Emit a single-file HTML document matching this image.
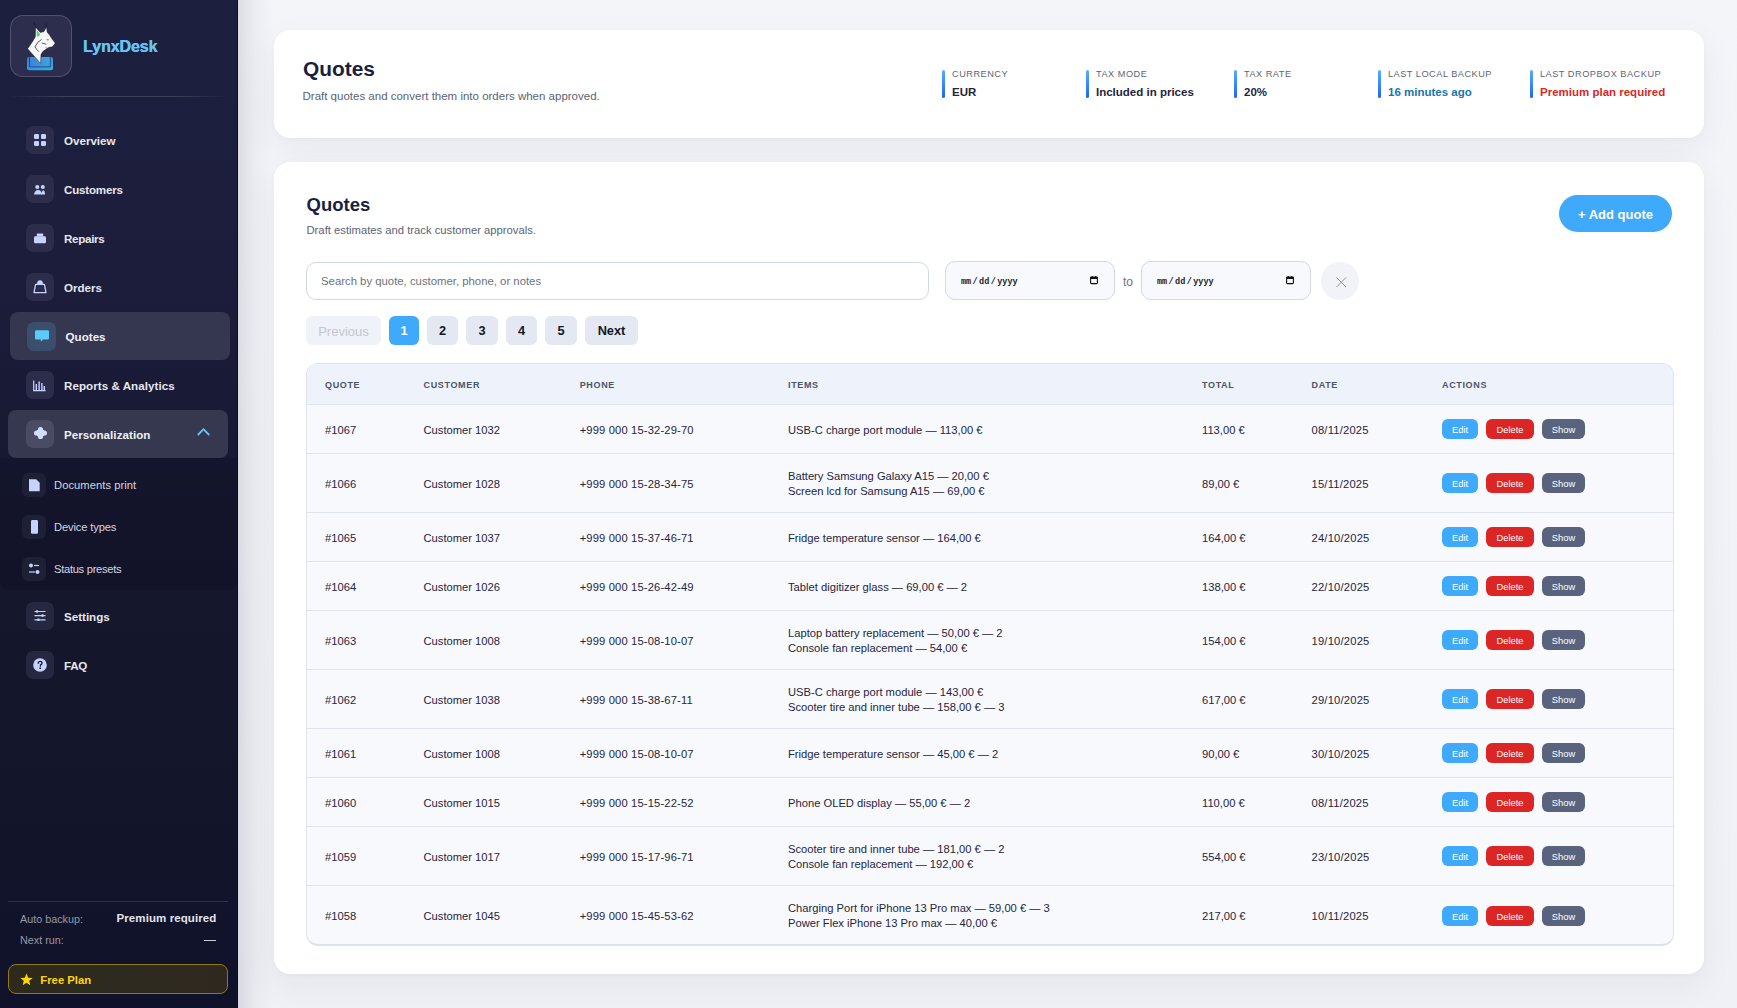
<!DOCTYPE html>
<html><head><meta charset="utf-8"><title>Quotes</title><style>
*{box-sizing:border-box;margin:0;padding:0}
html,body{width:1737px;height:1008px;overflow:hidden}
body{font-family:"Liberation Sans",sans-serif;background:linear-gradient(180deg,#f4f5f9,#f0f1f6);position:relative}
.t{position:absolute;line-height:1;white-space:nowrap}
.r{position:absolute}
svg{position:absolute;overflow:visible}
</style></head><body>
<div class="r" style="left:0;top:0;width:238px;height:1008px;background:linear-gradient(180deg,#1d1f3f 0%,#1c1e3c 22%,#191b36 38%,#15172d 58%,#13152a 80%,#10122a 100%)"></div>
<div class="r" style="left:237px;top:0;width:1px;height:1008px;background:#0b0d24"></div>
<div class="r" style="left:238px;top:0;width:36px;height:1008px;background:linear-gradient(90deg,rgba(10,12,40,.10),rgba(10,12,40,.03) 50%,rgba(10,12,40,0))"></div>
<div class="r" style="left:10px;top:15px;width:62px;height:62px;border-radius:13px;background:#2d2e4e;border:1px solid rgba(255,255,255,.17)"></div>
<svg style="left:0;top:0" width="100" height="100" viewBox="0 0 100 100">
<defs><linearGradient id="tg" x1="0" y1="0" x2="1" y2="1"><stop offset="0" stop-color="#3a7bd6"/><stop offset="1" stop-color="#36aee6"/></linearGradient>
<linearGradient id="tg2" x1="0" y1="0" x2="1" y2="0"><stop offset="0" stop-color="#3a86d8"/><stop offset="1" stop-color="#40a2e0"/></linearGradient></defs>
<rect x="27" y="57" width="26" height="13.2" rx="2" fill="url(#tg)"/>
<path d="M29.6 57 L29.6 66.8 L50.2 66.8 L50.2 57" fill="none" stroke="#22356e" stroke-width="0.9"/>
<rect x="30.3" y="57" width="19.2" height="9.2" fill="url(#tg2)"/>
<path d="M33.9 22.4 L35.9 27.6" stroke="#15172c" stroke-width="0.9"/>
<path d="M45.9 23.4 L46.4 27.2" stroke="#15172c" stroke-width="0.9"/>
<path d="M35.6 27.2 L40.3 32.4 L44 31.6 L46.5 26.8 L47.2 32.2 L49.6 35 L52.2 39.2 L55.2 43 L54 44.8 L52.4 46.8 L48.6 47.6 L45.6 49.6 L42.8 51.6 L41 54.6 L40.6 63.4 L27.6 48.8 L32.6 41.4 L35.3 36.9 Z" fill="#f6f7f9" stroke="#15172c" stroke-width="0.5"/>
<path d="M36.6 29.6 L40.2 34.6 L38.6 36.6 L36.8 36.4 Z" fill="#56d36a"/>
<ellipse cx="47.7" cy="39.7" rx="1.2" ry="0.7" fill="#3fbf5a"/>
<path d="M41.6 39.4 Q37.4 41.6 35 46.8 Q36.4 49.6 38.8 51.6" fill="none" stroke="#1b1d33" stroke-width="0.75"/>
<path d="M41.6 43 L46.4 44.2" stroke="#1b1d33" stroke-width="0.7"/>
<path d="M45.4 47.6 L48.6 48.6 L50.6 48.4" stroke="#3a3c50" stroke-width="0.5" fill="none"/>
</svg>
<div class="t" style="top:39.20px;font-size:16px;font-weight:700;color:#65c4f5;left:83.00px;text-shadow:0.35px 0 0 #65c4f5;letter-spacing:-0.1px">LynxDesk</div>
<div class="r" style="left:8px;top:96px;width:222px;height:1px;background:linear-gradient(90deg,rgba(255,255,255,0),rgba(255,255,255,.15) 25%,rgba(255,255,255,.15) 75%,rgba(255,255,255,0))"></div>
<div class="r" style="left:26px;top:126.0px;width:28px;height:28px;border-radius:7px;background:#2b2d4a"></div>
<svg style="left:34px;top:134px" width="12" height="12"><rect x="0" y="0" width="5" height="5" rx="1.3" fill="#c7d3ff"/><rect x="7" y="0" width="5" height="5" rx="1.3" fill="#c7d3ff"/><rect x="0" y="7" width="5" height="5" rx="1.3" fill="#c7d3ff"/><rect x="7" y="7" width="5" height="5" rx="1.3" fill="#c7d3ff"/></svg>
<div class="t" style="top:135.10px;font-size:11.6px;font-weight:700;color:#e6e7ef;left:64.00px;">Overview</div>
<div class="r" style="left:26px;top:175.0px;width:28px;height:28px;border-radius:7px;background:#2b2d4a"></div>
<svg style="left:34px;top:184px" width="12" height="11"><circle cx="3.3" cy="3" r="2.05" fill="#c7d3ff"/><circle cx="8.8" cy="3" r="2.05" fill="#c7d3ff"/><path d="M0.1 10.5 Q0.6 6 4.1 6 Q7.6 6 8.1 10.5 Z" fill="#c7d3ff"/><path d="M7.6 10.5 Q8 6.2 9.2 6.2 Q10.7 6.2 11.1 10.5 Z" fill="#c7d3ff"/></svg>
<div class="t" style="top:184.10px;font-size:11.6px;font-weight:700;color:#e6e7ef;left:64.00px;letter-spacing:-0.2px">Customers</div>
<div class="r" style="left:26px;top:224.0px;width:28px;height:28px;border-radius:7px;background:#2b2d4a"></div>
<svg style="left:34px;top:233px" width="12" height="11"><path d="M2.8 0.5 L9.2 0.5 L9.2 3.5 L2.8 3.5 Z" fill="#c7d3ff"/><rect x="0" y="3.3" width="12" height="7" rx="1.3" fill="#c7d3ff"/></svg>
<div class="t" style="top:233.10px;font-size:11.6px;font-weight:700;color:#e6e7ef;left:64.00px;letter-spacing:-0.3px">Repairs</div>
<div class="r" style="left:26px;top:273.0px;width:28px;height:28px;border-radius:7px;background:#2b2d4a"></div>
<svg style="left:33px;top:279px" width="14" height="15"><path d="M4 5 Q4 1.2 7 1.2 Q10 1.2 10 5 Z" fill="#c7d3ff"/><path d="M2.6 5.3 L11.4 5.3 L13 13.6 L1 13.6 Z" fill="none" stroke="#c7d3ff" stroke-width="1.3" stroke-linejoin="round"/></svg>
<div class="t" style="top:282.10px;font-size:11.6px;font-weight:700;color:#e6e7ef;left:64.00px;">Orders</div>
<div class="r" style="left:10px;top:312px;width:220px;height:48px;border-radius:8px;background:#353750"></div>
<div class="r" style="left:27px;top:321.5px;width:29px;height:29px;border-radius:7px;background:#3b4e6b"></div>
<svg style="left:35px;top:330px" width="14" height="13"><path d="M1.2 0.3 L12.8 0.3 Q14 0.3 14 1.5 L14 8.2 Q14 9.4 12.8 9.4 L8 9.4 L6 11.8 L5.8 9.4 L1.2 9.4 Q0 9.4 0 8.2 L0 1.5 Q0 0.3 1.2 0.3 Z" fill="#5ccbf9"/></svg>
<div class="t" style="top:331.10px;font-size:11.6px;font-weight:700;color:#eef0f6;left:65.60px;">Quotes</div>
<div class="r" style="left:26px;top:371.0px;width:28px;height:28px;border-radius:7px;background:#2b2d4a"></div>
<svg style="left:33px;top:380px" width="13" height="12"><path d="M0.7 0.5 L0.7 10.6 L12.6 10.6" fill="none" stroke="#c7d3ff" stroke-width="1.2"/><rect x="2.6" y="4" width="1.4" height="6" fill="#c7d3ff"/><rect x="5.4" y="1.5" width="1.4" height="8.5" fill="#c7d3ff"/><rect x="8.2" y="3" width="1.4" height="7" fill="#c7d3ff"/><rect x="10.6" y="6" width="1.4" height="4" fill="#c7d3ff"/></svg>
<div class="t" style="top:380.10px;font-size:11.6px;font-weight:700;color:#e6e7ef;left:64.00px;letter-spacing:0.05px">Reports &amp; Analytics</div>
<div class="r" style="left:8px;top:410px;width:220px;height:48px;border-radius:8px;background:#363850"></div>
<div class="r" style="left:26px;top:420.0px;width:28px;height:28px;border-radius:7px;background:#4a4c64"></div>
<svg style="left:33.5px;top:426.5px" width="13" height="12"><circle cx="6.5" cy="2.6" r="2.6" fill="#d2ddff"/><circle cx="6.5" cy="9.4" r="2.6" fill="#d2ddff"/><circle cx="2.6" cy="6" r="2.6" fill="#d2ddff"/><circle cx="10.4" cy="6" r="2.6" fill="#d2ddff"/><rect x="3" y="3" width="7" height="6" fill="#d2ddff"/></svg>
<div class="t" style="top:429.10px;font-size:11.6px;font-weight:700;color:#eef0f6;left:64.00px;letter-spacing:0.05px">Personalization</div>
<svg style="left:197px;top:427px" width="13" height="9"><path d="M0.8 8 L6.5 2.2 L12.2 8" fill="none" stroke="#5ccaf7" stroke-width="1.8"/></svg>
<div class="r" style="left:0;top:458px;width:237px;height:132px;background:rgba(8,9,24,.22);border-radius:0 0 8px 8px"></div>
<div class="r" style="left:22px;top:473px;width:24px;height:24px;border-radius:6px;background:#1e2035"></div>
<svg style="left:29px;top:479px" width="11" height="13"><path d="M0 0.2 L7.2 0.2 L10.7 3.8 L10.7 12.2 L0 12.2 Z" fill="#c7d3ff"/></svg>
<div class="t" style="top:480.40px;font-size:11.2px;font-weight:400;color:#d4d6e0;left:54.00px;letter-spacing:0.05px">Documents print</div>
<div class="r" style="left:22px;top:515px;width:24px;height:24px;border-radius:6px;background:#1e2035"></div>
<svg style="left:30.5px;top:520px" width="8" height="14"><rect x="0" y="0" width="7" height="13.7" rx="1.3" fill="#c7d3ff"/></svg>
<div class="t" style="top:522.40px;font-size:11.2px;font-weight:400;color:#d4d6e0;left:54.00px;letter-spacing:-0.15px">Device types</div>
<div class="r" style="left:22px;top:557px;width:24px;height:24px;border-radius:6px;background:#1e2035"></div>
<svg style="left:28px;top:562px" width="13" height="13"><circle cx="3" cy="3.5" r="2" fill="#c7d3ff"/><path d="M6 3.5 L11 3.5" stroke="#c7d3ff" stroke-width="1.2"/><path d="M1 10 L7 10" stroke="#c7d3ff" stroke-width="1.2"/><circle cx="9.5" cy="10" r="2" fill="#c7d3ff"/></svg>
<div class="t" style="top:564.40px;font-size:11.2px;font-weight:400;color:#d4d6e0;left:54.00px;letter-spacing:-0.3px">Status presets</div>
<div class="r" style="left:26px;top:602.0px;width:28px;height:28px;border-radius:7px;background:#262841"></div>
<svg style="left:34px;top:610px" width="12" height="12"><path d="M0.5 1.5 L11.5 1.5 M0.5 5.6 L11.5 5.6 M0.5 9.8 L11.5 9.8" stroke="#c7d3ff" stroke-width="1.2"/><circle cx="3" cy="1.5" r="1.3" fill="#c7d3ff"/><circle cx="8.5" cy="5.6" r="1.3" fill="#c7d3ff"/><circle cx="4.5" cy="9.8" r="1.3" fill="#c7d3ff"/></svg>
<div class="t" style="top:611.10px;font-size:11.6px;font-weight:700;color:#e6e7ef;left:64.00px;">Settings</div>
<div class="r" style="left:26px;top:651.0px;width:28px;height:28px;border-radius:7px;background:#262841"></div>
<svg style="left:33px;top:658px" width="14" height="14"><circle cx="7" cy="7" r="6.8" fill="#c7d3ff"/><path d="M5.3 5.3 Q5.3 3.4 7.2 3.4 Q9 3.4 9 5 Q9 6.2 7.6 6.8 L7.4 8" fill="none" stroke="#1a1c33" stroke-width="1.4" stroke-linecap="round"/><circle cx="7.2" cy="10.2" r="0.9" fill="#1a1c33"/></svg>
<div class="t" style="top:660.10px;font-size:11.6px;font-weight:700;color:#e6e7ef;left:64.00px;letter-spacing:-0.3px">FAQ</div>
<div class="r" style="left:8px;top:901px;width:220px;height:1px;background:rgba(255,255,255,.13)"></div>
<div class="t" style="top:913.60px;font-size:10.8px;font-weight:400;color:#9899a9;left:20.00px;">Auto backup:</div>
<div class="t" style="top:913.45px;font-size:11.5px;font-weight:700;color:#e3e4ec;right:1520.50px;text-align:right;letter-spacing:0.1px">Premium required</div>
<div class="t" style="top:934.60px;font-size:10.8px;font-weight:400;color:#9899a9;left:20.00px;">Next run:</div>
<div class="r" style="left:204px;top:939.6px;width:12px;height:1.2px;background:#c9cad4"></div>
<div class="r" style="left:8px;top:964px;width:220px;height:30px;border-radius:8px;background:linear-gradient(90deg,#2d2a1c,#2e2a20 60%,#30281f);border:1px solid #8f7a12"></div>
<svg style="left:20px;top:972.5px" width="13" height="13" viewBox="0 0 24 24"><path d="M12 1 L15.1 8.6 L23.3 9.2 L17 14.4 L19 22.4 L12 18 L5 22.4 L7 14.4 L0.7 9.2 L8.9 8.6 Z" fill="#ffd60a"/></svg>
<div class="t" style="top:974.55px;font-size:11.3px;font-weight:700;color:#ffd60a;left:40.30px;">Free Plan</div>
<div class="r" style="left:274px;top:30px;width:1430px;height:108px;border-radius:16px;background:#fff;box-shadow:0 12px 36px rgba(30,40,80,.055),0 2px 6px rgba(30,40,80,.025)"></div>
<div class="t" style="top:59.05px;font-size:20.9px;font-weight:700;color:#1a1f3d;left:303.00px;">Quotes</div>
<div class="t" style="top:91.00px;font-size:11.5px;font-weight:400;color:#5a6378;left:302.50px;">Draft quotes and convert them into orders when approved.</div>
<div class="r" style="left:942px;top:70px;width:3px;height:28px;border-radius:2px;background:linear-gradient(180deg,#55adff,#2266ee)"></div>
<div class="t" style="top:70.40px;font-size:9.2px;font-weight:400;color:#5b6478;letter-spacing:0.5px;left:952.00px;">CURRENCY</div>
<div class="t" style="top:87.15px;font-size:11.5px;font-weight:700;color:#1f2540;left:952.00px;">EUR</div>
<div class="r" style="left:1086px;top:70px;width:3px;height:28px;border-radius:2px;background:linear-gradient(180deg,#55adff,#2266ee)"></div>
<div class="t" style="top:70.40px;font-size:9.2px;font-weight:400;color:#5b6478;letter-spacing:0.5px;left:1096.00px;">TAX MODE</div>
<div class="t" style="top:87.15px;font-size:11.5px;font-weight:700;color:#1f2540;left:1096.00px;">Included in prices</div>
<div class="r" style="left:1234px;top:70px;width:3px;height:28px;border-radius:2px;background:linear-gradient(180deg,#55adff,#2266ee)"></div>
<div class="t" style="top:70.40px;font-size:9.2px;font-weight:400;color:#5b6478;letter-spacing:0.5px;left:1244.00px;">TAX RATE</div>
<div class="t" style="top:87.15px;font-size:11.5px;font-weight:700;color:#1f2540;left:1244.00px;">20%</div>
<div class="r" style="left:1378px;top:70px;width:3px;height:28px;border-radius:2px;background:linear-gradient(180deg,#55adff,#2266ee)"></div>
<div class="t" style="top:70.40px;font-size:9.2px;font-weight:400;color:#5b6478;letter-spacing:0.5px;left:1388.00px;">LAST LOCAL BACKUP</div>
<div class="t" style="top:87.15px;font-size:11.5px;font-weight:700;color:#1677a8;left:1388.00px;">16 minutes ago</div>
<div class="r" style="left:1530px;top:70px;width:3px;height:28px;border-radius:2px;background:linear-gradient(180deg,#55adff,#2266ee)"></div>
<div class="t" style="top:70.40px;font-size:9.2px;font-weight:400;color:#5b6478;letter-spacing:0.5px;left:1540.00px;">LAST DROPBOX BACKUP</div>
<div class="t" style="top:87.15px;font-size:11.5px;font-weight:700;color:#dc2626;left:1540.00px;">Premium plan required</div>
<div class="r" style="left:274px;top:162px;width:1430px;height:812px;border-radius:16px;background:#fff;box-shadow:0 12px 36px rgba(30,40,80,.055),0 2px 6px rgba(30,40,80,.025)"></div>
<div class="t" style="top:196.00px;font-size:18.5px;font-weight:700;color:#1a1f3d;left:306.50px;">Quotes</div>
<div class="t" style="top:225.18px;font-size:11.25px;font-weight:400;color:#5a6378;left:306.50px;">Draft estimates and track customer approvals.</div>
<div class="r" style="left:1559px;top:195px;width:113px;height:37px;border-radius:19px;background:#3fa9fb"></div>
<div class="t" style="top:207.75px;font-size:13px;font-weight:700;color:#ffffff;left:1315.50px;width:600px;text-align:center;">+ Add quote</div>
<div class="r" style="left:306px;top:262px;width:623px;height:38px;border-radius:10px;background:#fff;border:1px solid #d3d8e3"></div>
<div class="t" style="top:276.32px;font-size:11.35px;font-weight:400;color:#6b7280;left:321.00px;">Search by quote, customer, phone, or notes</div>
<div class="r" style="left:945px;top:261px;width:170px;height:39px;border-radius:10px;background:#f8f9fd;border:1px solid #d3d8e3"></div>
<div class="t" style="top:277.55px;font-size:8.5px;font-weight:700;color:#222222;left:961.00px;font-family:'Liberation Mono',monospace;word-spacing:-3.7px">mm / dd / yyyy</div>
<svg style="left:1090px;top:276px" width="8" height="8"><rect x="0.6" y="1" width="6.8" height="6.6" rx="0.8" fill="none" stroke="#111" stroke-width="1.1"/><rect x="0.6" y="1" width="6.8" height="2" fill="#111"/><path d="M2.2 0 L2.2 1.5 M5.8 0 L5.8 1.5" stroke="#111" stroke-width="1"/></svg>
<div class="r" style="left:1141px;top:261px;width:170px;height:39px;border-radius:10px;background:#f8f9fd;border:1px solid #d3d8e3"></div>
<div class="t" style="top:277.55px;font-size:8.5px;font-weight:700;color:#222222;left:1157.00px;font-family:'Liberation Mono',monospace;word-spacing:-3.7px">mm / dd / yyyy</div>
<svg style="left:1286px;top:276px" width="8" height="8"><rect x="0.6" y="1" width="6.8" height="6.6" rx="0.8" fill="none" stroke="#111" stroke-width="1.1"/><rect x="0.6" y="1" width="6.8" height="2" fill="#111"/><path d="M2.2 0 L2.2 1.5 M5.8 0 L5.8 1.5" stroke="#111" stroke-width="1"/></svg>
<div class="t" style="top:275.50px;font-size:12px;font-weight:400;color:#6b7280;left:1123.00px;">to</div>
<div class="r" style="left:1321px;top:262px;width:38px;height:38px;border-radius:19px;background:#f2f3f8"></div>
<svg style="left:1335.5px;top:276.5px" width="11" height="11"><path d="M0.5 0.5 L10 10 M10 0.5 L0.5 10" stroke="#8e929e" stroke-width="1"/></svg>
<div class="r" style="left:306px;top:316px;width:75px;height:29px;border-radius:6px;background:#eff2f8"></div>
<div class="t" style="top:325.30px;font-size:13px;font-weight:400;color:#c3c8d2;left:43.50px;width:600px;text-align:center;">Previous</div>
<div class="r" style="left:389px;top:316px;width:30px;height:29px;border-radius:6px;background:#3fa9fb"></div>
<div class="t" style="top:325.40px;font-size:12.8px;font-weight:700;color:#ffffff;left:104.00px;width:600px;text-align:center;">1</div>
<div class="r" style="left:427px;top:316px;width:31px;height:29px;border-radius:6px;background:#e3e8f2"></div>
<div class="t" style="top:325.40px;font-size:12.8px;font-weight:700;color:#111827;left:142.50px;width:600px;text-align:center;">2</div>
<div class="r" style="left:466px;top:316px;width:32px;height:29px;border-radius:6px;background:#e3e8f2"></div>
<div class="t" style="top:325.40px;font-size:12.8px;font-weight:700;color:#111827;left:182.00px;width:600px;text-align:center;">3</div>
<div class="r" style="left:506px;top:316px;width:31px;height:29px;border-radius:6px;background:#e3e8f2"></div>
<div class="t" style="top:325.40px;font-size:12.8px;font-weight:700;color:#111827;left:221.50px;width:600px;text-align:center;">4</div>
<div class="r" style="left:545px;top:316px;width:32px;height:29px;border-radius:6px;background:#e3e8f2"></div>
<div class="t" style="top:325.40px;font-size:12.8px;font-weight:700;color:#111827;left:261.00px;width:600px;text-align:center;">5</div>
<div class="r" style="left:585px;top:316px;width:53px;height:29px;border-radius:6px;background:#e3e8f2"></div>
<div class="t" style="top:325.40px;font-size:12.8px;font-weight:700;color:#111827;left:311.50px;width:600px;text-align:center;">Next</div>
<div class="r" style="left:306px;top:363px;width:1368px;height:583px;border-radius:12px;background:#f8f9fd;border:1px solid #dfe4ee;border-bottom:2px solid #dde3ee;overflow:hidden"><div class="r" style="left:0;top:0;width:100%;height:41px;background:#eef2fa"></div></div>
<div class="t" style="top:380.80px;font-size:9px;font-weight:700;color:#4b5468;letter-spacing:0.65px;left:325.00px;">QUOTE</div>
<div class="t" style="top:380.80px;font-size:9px;font-weight:700;color:#4b5468;letter-spacing:0.65px;left:423.50px;">CUSTOMER</div>
<div class="t" style="top:380.80px;font-size:9px;font-weight:700;color:#4b5468;letter-spacing:0.65px;left:579.70px;">PHONE</div>
<div class="t" style="top:380.80px;font-size:9px;font-weight:700;color:#4b5468;letter-spacing:0.65px;left:788.00px;">ITEMS</div>
<div class="t" style="top:380.80px;font-size:9px;font-weight:700;color:#4b5468;letter-spacing:0.65px;left:1202.00px;">TOTAL</div>
<div class="t" style="top:380.80px;font-size:9px;font-weight:700;color:#4b5468;letter-spacing:0.65px;left:1311.50px;">DATE</div>
<div class="t" style="top:380.80px;font-size:9px;font-weight:700;color:#4b5468;letter-spacing:0.65px;left:1442.00px;">ACTIONS</div>
<div class="r" style="left:307px;top:404px;width:1366px;height:1px;background:#dfe4ee"></div>
<div class="r" style="left:307px;top:453px;width:1366px;height:1px;background:#dfe4ee"></div>
<div class="r" style="left:307px;top:512px;width:1366px;height:1px;background:#dfe4ee"></div>
<div class="r" style="left:307px;top:561px;width:1366px;height:1px;background:#dfe4ee"></div>
<div class="r" style="left:307px;top:610px;width:1366px;height:1px;background:#dfe4ee"></div>
<div class="r" style="left:307px;top:669px;width:1366px;height:1px;background:#dfe4ee"></div>
<div class="r" style="left:307px;top:728px;width:1366px;height:1px;background:#dfe4ee"></div>
<div class="r" style="left:307px;top:777px;width:1366px;height:1px;background:#dfe4ee"></div>
<div class="r" style="left:307px;top:826px;width:1366px;height:1px;background:#dfe4ee"></div>
<div class="r" style="left:307px;top:885px;width:1366px;height:1px;background:#dfe4ee"></div>
<div class="t" style="top:424.75px;font-size:11.2px;font-weight:400;color:#1f2540;left:325.00px;">#1067</div>
<div class="t" style="top:424.75px;font-size:11.2px;font-weight:400;color:#1f2540;left:423.50px;">Customer 1032</div>
<div class="t" style="top:424.75px;font-size:11.2px;font-weight:400;color:#1f2540;left:579.70px;letter-spacing:0.15px">+999 000 15-32-29-70</div>
<div class="t" style="top:424.75px;font-size:11.2px;font-weight:400;color:#1f2540;left:788.00px;">USB-C charge port module — 113,00 €</div>
<div class="t" style="top:424.75px;font-size:11.2px;font-weight:400;color:#1f2540;left:1202.00px;">113,00 €</div>
<div class="t" style="top:424.75px;font-size:11.2px;font-weight:400;color:#1f2540;left:1311.50px;letter-spacing:0.2px">08/11/2025</div>
<div class="r" style="left:1442px;top:419px;width:36px;height:20px;border-radius:6px;background:#3fa9fb"></div>
<div class="t" style="top:425.35px;font-size:9.4px;font-weight:400;color:#fff;left:1160.00px;width:600px;text-align:center;">Edit</div>
<div class="r" style="left:1486px;top:419px;width:48px;height:20px;border-radius:6px;background:#dc2626"></div>
<div class="t" style="top:425.35px;font-size:9.4px;font-weight:400;color:#fff;left:1210.00px;width:600px;text-align:center;">Delete</div>
<div class="r" style="left:1542px;top:419px;width:43px;height:20px;border-radius:6px;background:#5a637d"></div>
<div class="t" style="top:425.35px;font-size:9.4px;font-weight:400;color:#fff;left:1263.50px;width:600px;text-align:center;">Show</div>
<div class="t" style="top:478.75px;font-size:11.2px;font-weight:400;color:#1f2540;left:325.00px;">#1066</div>
<div class="t" style="top:478.75px;font-size:11.2px;font-weight:400;color:#1f2540;left:423.50px;">Customer 1028</div>
<div class="t" style="top:478.75px;font-size:11.2px;font-weight:400;color:#1f2540;left:579.70px;letter-spacing:0.15px">+999 000 15-28-34-75</div>
<div class="t" style="top:470.65px;font-size:11.2px;font-weight:400;color:#1f2540;left:788.00px;">Battery Samsung Galaxy A15 — 20,00 €</div>
<div class="t" style="top:485.65px;font-size:11.2px;font-weight:400;color:#1f2540;left:788.00px;">Screen lcd for Samsung A15 — 69,00 €</div>
<div class="t" style="top:478.75px;font-size:11.2px;font-weight:400;color:#1f2540;left:1202.00px;">89,00 €</div>
<div class="t" style="top:478.75px;font-size:11.2px;font-weight:400;color:#1f2540;left:1311.50px;letter-spacing:0.2px">15/11/2025</div>
<div class="r" style="left:1442px;top:473px;width:36px;height:20px;border-radius:6px;background:#3fa9fb"></div>
<div class="t" style="top:479.35px;font-size:9.4px;font-weight:400;color:#fff;left:1160.00px;width:600px;text-align:center;">Edit</div>
<div class="r" style="left:1486px;top:473px;width:48px;height:20px;border-radius:6px;background:#dc2626"></div>
<div class="t" style="top:479.35px;font-size:9.4px;font-weight:400;color:#fff;left:1210.00px;width:600px;text-align:center;">Delete</div>
<div class="r" style="left:1542px;top:473px;width:43px;height:20px;border-radius:6px;background:#5a637d"></div>
<div class="t" style="top:479.35px;font-size:9.4px;font-weight:400;color:#fff;left:1263.50px;width:600px;text-align:center;">Show</div>
<div class="t" style="top:532.75px;font-size:11.2px;font-weight:400;color:#1f2540;left:325.00px;">#1065</div>
<div class="t" style="top:532.75px;font-size:11.2px;font-weight:400;color:#1f2540;left:423.50px;">Customer 1037</div>
<div class="t" style="top:532.75px;font-size:11.2px;font-weight:400;color:#1f2540;left:579.70px;letter-spacing:0.15px">+999 000 15-37-46-71</div>
<div class="t" style="top:532.75px;font-size:11.2px;font-weight:400;color:#1f2540;left:788.00px;">Fridge temperature sensor — 164,00 €</div>
<div class="t" style="top:532.75px;font-size:11.2px;font-weight:400;color:#1f2540;left:1202.00px;">164,00 €</div>
<div class="t" style="top:532.75px;font-size:11.2px;font-weight:400;color:#1f2540;left:1311.50px;letter-spacing:0.2px">24/10/2025</div>
<div class="r" style="left:1442px;top:527px;width:36px;height:20px;border-radius:6px;background:#3fa9fb"></div>
<div class="t" style="top:533.35px;font-size:9.4px;font-weight:400;color:#fff;left:1160.00px;width:600px;text-align:center;">Edit</div>
<div class="r" style="left:1486px;top:527px;width:48px;height:20px;border-radius:6px;background:#dc2626"></div>
<div class="t" style="top:533.35px;font-size:9.4px;font-weight:400;color:#fff;left:1210.00px;width:600px;text-align:center;">Delete</div>
<div class="r" style="left:1542px;top:527px;width:43px;height:20px;border-radius:6px;background:#5a637d"></div>
<div class="t" style="top:533.35px;font-size:9.4px;font-weight:400;color:#fff;left:1263.50px;width:600px;text-align:center;">Show</div>
<div class="t" style="top:581.75px;font-size:11.2px;font-weight:400;color:#1f2540;left:325.00px;">#1064</div>
<div class="t" style="top:581.75px;font-size:11.2px;font-weight:400;color:#1f2540;left:423.50px;">Customer 1026</div>
<div class="t" style="top:581.75px;font-size:11.2px;font-weight:400;color:#1f2540;left:579.70px;letter-spacing:0.15px">+999 000 15-26-42-49</div>
<div class="t" style="top:581.75px;font-size:11.2px;font-weight:400;color:#1f2540;left:788.00px;">Tablet digitizer glass — 69,00 € — 2</div>
<div class="t" style="top:581.75px;font-size:11.2px;font-weight:400;color:#1f2540;left:1202.00px;">138,00 €</div>
<div class="t" style="top:581.75px;font-size:11.2px;font-weight:400;color:#1f2540;left:1311.50px;letter-spacing:0.2px">22/10/2025</div>
<div class="r" style="left:1442px;top:576px;width:36px;height:20px;border-radius:6px;background:#3fa9fb"></div>
<div class="t" style="top:582.35px;font-size:9.4px;font-weight:400;color:#fff;left:1160.00px;width:600px;text-align:center;">Edit</div>
<div class="r" style="left:1486px;top:576px;width:48px;height:20px;border-radius:6px;background:#dc2626"></div>
<div class="t" style="top:582.35px;font-size:9.4px;font-weight:400;color:#fff;left:1210.00px;width:600px;text-align:center;">Delete</div>
<div class="r" style="left:1542px;top:576px;width:43px;height:20px;border-radius:6px;background:#5a637d"></div>
<div class="t" style="top:582.35px;font-size:9.4px;font-weight:400;color:#fff;left:1263.50px;width:600px;text-align:center;">Show</div>
<div class="t" style="top:635.75px;font-size:11.2px;font-weight:400;color:#1f2540;left:325.00px;">#1063</div>
<div class="t" style="top:635.75px;font-size:11.2px;font-weight:400;color:#1f2540;left:423.50px;">Customer 1008</div>
<div class="t" style="top:635.75px;font-size:11.2px;font-weight:400;color:#1f2540;left:579.70px;letter-spacing:0.15px">+999 000 15-08-10-07</div>
<div class="t" style="top:627.65px;font-size:11.2px;font-weight:400;color:#1f2540;left:788.00px;">Laptop battery replacement — 50,00 € — 2</div>
<div class="t" style="top:642.65px;font-size:11.2px;font-weight:400;color:#1f2540;left:788.00px;">Console fan replacement — 54,00 €</div>
<div class="t" style="top:635.75px;font-size:11.2px;font-weight:400;color:#1f2540;left:1202.00px;">154,00 €</div>
<div class="t" style="top:635.75px;font-size:11.2px;font-weight:400;color:#1f2540;left:1311.50px;letter-spacing:0.2px">19/10/2025</div>
<div class="r" style="left:1442px;top:630px;width:36px;height:20px;border-radius:6px;background:#3fa9fb"></div>
<div class="t" style="top:636.35px;font-size:9.4px;font-weight:400;color:#fff;left:1160.00px;width:600px;text-align:center;">Edit</div>
<div class="r" style="left:1486px;top:630px;width:48px;height:20px;border-radius:6px;background:#dc2626"></div>
<div class="t" style="top:636.35px;font-size:9.4px;font-weight:400;color:#fff;left:1210.00px;width:600px;text-align:center;">Delete</div>
<div class="r" style="left:1542px;top:630px;width:43px;height:20px;border-radius:6px;background:#5a637d"></div>
<div class="t" style="top:636.35px;font-size:9.4px;font-weight:400;color:#fff;left:1263.50px;width:600px;text-align:center;">Show</div>
<div class="t" style="top:694.75px;font-size:11.2px;font-weight:400;color:#1f2540;left:325.00px;">#1062</div>
<div class="t" style="top:694.75px;font-size:11.2px;font-weight:400;color:#1f2540;left:423.50px;">Customer 1038</div>
<div class="t" style="top:694.75px;font-size:11.2px;font-weight:400;color:#1f2540;left:579.70px;letter-spacing:0.15px">+999 000 15-38-67-11</div>
<div class="t" style="top:686.65px;font-size:11.2px;font-weight:400;color:#1f2540;left:788.00px;">USB-C charge port module — 143,00 €</div>
<div class="t" style="top:701.65px;font-size:11.2px;font-weight:400;color:#1f2540;left:788.00px;">Scooter tire and inner tube — 158,00 € — 3</div>
<div class="t" style="top:694.75px;font-size:11.2px;font-weight:400;color:#1f2540;left:1202.00px;">617,00 €</div>
<div class="t" style="top:694.75px;font-size:11.2px;font-weight:400;color:#1f2540;left:1311.50px;letter-spacing:0.2px">29/10/2025</div>
<div class="r" style="left:1442px;top:689px;width:36px;height:20px;border-radius:6px;background:#3fa9fb"></div>
<div class="t" style="top:695.35px;font-size:9.4px;font-weight:400;color:#fff;left:1160.00px;width:600px;text-align:center;">Edit</div>
<div class="r" style="left:1486px;top:689px;width:48px;height:20px;border-radius:6px;background:#dc2626"></div>
<div class="t" style="top:695.35px;font-size:9.4px;font-weight:400;color:#fff;left:1210.00px;width:600px;text-align:center;">Delete</div>
<div class="r" style="left:1542px;top:689px;width:43px;height:20px;border-radius:6px;background:#5a637d"></div>
<div class="t" style="top:695.35px;font-size:9.4px;font-weight:400;color:#fff;left:1263.50px;width:600px;text-align:center;">Show</div>
<div class="t" style="top:748.75px;font-size:11.2px;font-weight:400;color:#1f2540;left:325.00px;">#1061</div>
<div class="t" style="top:748.75px;font-size:11.2px;font-weight:400;color:#1f2540;left:423.50px;">Customer 1008</div>
<div class="t" style="top:748.75px;font-size:11.2px;font-weight:400;color:#1f2540;left:579.70px;letter-spacing:0.15px">+999 000 15-08-10-07</div>
<div class="t" style="top:748.75px;font-size:11.2px;font-weight:400;color:#1f2540;left:788.00px;">Fridge temperature sensor — 45,00 € — 2</div>
<div class="t" style="top:748.75px;font-size:11.2px;font-weight:400;color:#1f2540;left:1202.00px;">90,00 €</div>
<div class="t" style="top:748.75px;font-size:11.2px;font-weight:400;color:#1f2540;left:1311.50px;letter-spacing:0.2px">30/10/2025</div>
<div class="r" style="left:1442px;top:743px;width:36px;height:20px;border-radius:6px;background:#3fa9fb"></div>
<div class="t" style="top:749.35px;font-size:9.4px;font-weight:400;color:#fff;left:1160.00px;width:600px;text-align:center;">Edit</div>
<div class="r" style="left:1486px;top:743px;width:48px;height:20px;border-radius:6px;background:#dc2626"></div>
<div class="t" style="top:749.35px;font-size:9.4px;font-weight:400;color:#fff;left:1210.00px;width:600px;text-align:center;">Delete</div>
<div class="r" style="left:1542px;top:743px;width:43px;height:20px;border-radius:6px;background:#5a637d"></div>
<div class="t" style="top:749.35px;font-size:9.4px;font-weight:400;color:#fff;left:1263.50px;width:600px;text-align:center;">Show</div>
<div class="t" style="top:797.75px;font-size:11.2px;font-weight:400;color:#1f2540;left:325.00px;">#1060</div>
<div class="t" style="top:797.75px;font-size:11.2px;font-weight:400;color:#1f2540;left:423.50px;">Customer 1015</div>
<div class="t" style="top:797.75px;font-size:11.2px;font-weight:400;color:#1f2540;left:579.70px;letter-spacing:0.15px">+999 000 15-15-22-52</div>
<div class="t" style="top:797.75px;font-size:11.2px;font-weight:400;color:#1f2540;left:788.00px;">Phone OLED display — 55,00 € — 2</div>
<div class="t" style="top:797.75px;font-size:11.2px;font-weight:400;color:#1f2540;left:1202.00px;">110,00 €</div>
<div class="t" style="top:797.75px;font-size:11.2px;font-weight:400;color:#1f2540;left:1311.50px;letter-spacing:0.2px">08/11/2025</div>
<div class="r" style="left:1442px;top:792px;width:36px;height:20px;border-radius:6px;background:#3fa9fb"></div>
<div class="t" style="top:798.35px;font-size:9.4px;font-weight:400;color:#fff;left:1160.00px;width:600px;text-align:center;">Edit</div>
<div class="r" style="left:1486px;top:792px;width:48px;height:20px;border-radius:6px;background:#dc2626"></div>
<div class="t" style="top:798.35px;font-size:9.4px;font-weight:400;color:#fff;left:1210.00px;width:600px;text-align:center;">Delete</div>
<div class="r" style="left:1542px;top:792px;width:43px;height:20px;border-radius:6px;background:#5a637d"></div>
<div class="t" style="top:798.35px;font-size:9.4px;font-weight:400;color:#fff;left:1263.50px;width:600px;text-align:center;">Show</div>
<div class="t" style="top:851.75px;font-size:11.2px;font-weight:400;color:#1f2540;left:325.00px;">#1059</div>
<div class="t" style="top:851.75px;font-size:11.2px;font-weight:400;color:#1f2540;left:423.50px;">Customer 1017</div>
<div class="t" style="top:851.75px;font-size:11.2px;font-weight:400;color:#1f2540;left:579.70px;letter-spacing:0.15px">+999 000 15-17-96-71</div>
<div class="t" style="top:843.65px;font-size:11.2px;font-weight:400;color:#1f2540;left:788.00px;">Scooter tire and inner tube — 181,00 € — 2</div>
<div class="t" style="top:858.65px;font-size:11.2px;font-weight:400;color:#1f2540;left:788.00px;">Console fan replacement — 192,00 €</div>
<div class="t" style="top:851.75px;font-size:11.2px;font-weight:400;color:#1f2540;left:1202.00px;">554,00 €</div>
<div class="t" style="top:851.75px;font-size:11.2px;font-weight:400;color:#1f2540;left:1311.50px;letter-spacing:0.2px">23/10/2025</div>
<div class="r" style="left:1442px;top:846px;width:36px;height:20px;border-radius:6px;background:#3fa9fb"></div>
<div class="t" style="top:852.35px;font-size:9.4px;font-weight:400;color:#fff;left:1160.00px;width:600px;text-align:center;">Edit</div>
<div class="r" style="left:1486px;top:846px;width:48px;height:20px;border-radius:6px;background:#dc2626"></div>
<div class="t" style="top:852.35px;font-size:9.4px;font-weight:400;color:#fff;left:1210.00px;width:600px;text-align:center;">Delete</div>
<div class="r" style="left:1542px;top:846px;width:43px;height:20px;border-radius:6px;background:#5a637d"></div>
<div class="t" style="top:852.35px;font-size:9.4px;font-weight:400;color:#fff;left:1263.50px;width:600px;text-align:center;">Show</div>
<div class="t" style="top:911.25px;font-size:11.2px;font-weight:400;color:#1f2540;left:325.00px;">#1058</div>
<div class="t" style="top:911.25px;font-size:11.2px;font-weight:400;color:#1f2540;left:423.50px;">Customer 1045</div>
<div class="t" style="top:911.25px;font-size:11.2px;font-weight:400;color:#1f2540;left:579.70px;letter-spacing:0.15px">+999 000 15-45-53-62</div>
<div class="t" style="top:903.15px;font-size:11.2px;font-weight:400;color:#1f2540;left:788.00px;">Charging Port for iPhone 13 Pro max — 59,00 € — 3</div>
<div class="t" style="top:918.15px;font-size:11.2px;font-weight:400;color:#1f2540;left:788.00px;">Power Flex iPhone 13 Pro max — 40,00 €</div>
<div class="t" style="top:911.25px;font-size:11.2px;font-weight:400;color:#1f2540;left:1202.00px;">217,00 €</div>
<div class="t" style="top:911.25px;font-size:11.2px;font-weight:400;color:#1f2540;left:1311.50px;letter-spacing:0.2px">10/11/2025</div>
<div class="r" style="left:1442px;top:906px;width:36px;height:20px;border-radius:6px;background:#3fa9fb"></div>
<div class="t" style="top:911.85px;font-size:9.4px;font-weight:400;color:#fff;left:1160.00px;width:600px;text-align:center;">Edit</div>
<div class="r" style="left:1486px;top:906px;width:48px;height:20px;border-radius:6px;background:#dc2626"></div>
<div class="t" style="top:911.85px;font-size:9.4px;font-weight:400;color:#fff;left:1210.00px;width:600px;text-align:center;">Delete</div>
<div class="r" style="left:1542px;top:906px;width:43px;height:20px;border-radius:6px;background:#5a637d"></div>
<div class="t" style="top:911.85px;font-size:9.4px;font-weight:400;color:#fff;left:1263.50px;width:600px;text-align:center;">Show</div>
</body></html>
